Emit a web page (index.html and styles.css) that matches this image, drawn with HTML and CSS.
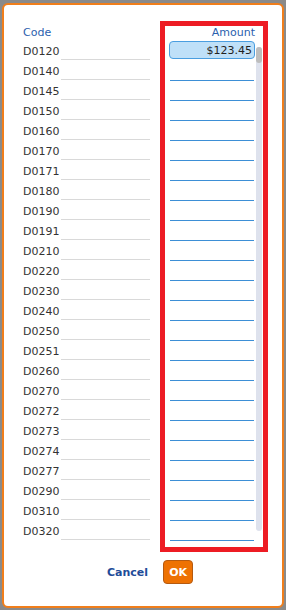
FILE: index.html
```html
<!DOCTYPE html>
<html lang="en">
<head>
    <meta charset="UTF-8">
    <meta name="viewport" content="width=device-width, initial-scale=1.0">
    <title>Amounts</title>
    <link rel="stylesheet" href="styles.css">
</head>
<body>
    <!-- Dialog -->
    <div class="dialog">
        <div class="dialog-body">
            <!-- Code column -->
            <div class="codes">
                <div class="col-header">Code</div>
                <div class="code-row"><span class="code-label">D0120</span><span class="code-line"></span></div>
                <div class="code-row"><span class="code-label">D0140</span><span class="code-line"></span></div>
                <div class="code-row"><span class="code-label">D0145</span><span class="code-line"></span></div>
                <div class="code-row"><span class="code-label">D0150</span><span class="code-line"></span></div>
                <div class="code-row"><span class="code-label">D0160</span><span class="code-line"></span></div>
                <div class="code-row"><span class="code-label">D0170</span><span class="code-line"></span></div>
                <div class="code-row"><span class="code-label">D0171</span><span class="code-line"></span></div>
                <div class="code-row"><span class="code-label">D0180</span><span class="code-line"></span></div>
                <div class="code-row"><span class="code-label">D0190</span><span class="code-line"></span></div>
                <div class="code-row"><span class="code-label">D0191</span><span class="code-line"></span></div>
                <div class="code-row"><span class="code-label">D0210</span><span class="code-line"></span></div>
                <div class="code-row"><span class="code-label">D0220</span><span class="code-line"></span></div>
                <div class="code-row"><span class="code-label">D0230</span><span class="code-line"></span></div>
                <div class="code-row"><span class="code-label">D0240</span><span class="code-line"></span></div>
                <div class="code-row"><span class="code-label">D0250</span><span class="code-line"></span></div>
                <div class="code-row"><span class="code-label">D0251</span><span class="code-line"></span></div>
                <div class="code-row"><span class="code-label">D0260</span><span class="code-line"></span></div>
                <div class="code-row"><span class="code-label">D0270</span><span class="code-line"></span></div>
                <div class="code-row"><span class="code-label">D0272</span><span class="code-line"></span></div>
                <div class="code-row"><span class="code-label">D0273</span><span class="code-line"></span></div>
                <div class="code-row"><span class="code-label">D0274</span><span class="code-line"></span></div>
                <div class="code-row"><span class="code-label">D0277</span><span class="code-line"></span></div>
                <div class="code-row"><span class="code-label">D0290</span><span class="code-line"></span></div>
                <div class="code-row"><span class="code-label">D0310</span><span class="code-line"></span></div>
                <div class="code-row"><span class="code-label">D0320</span><span class="code-line"></span></div>
            </div>

            <!-- Amount column (highlighted) -->
            <div class="amount-panel">
                <div class="amounts">
                    <div class="col-header amount-header">Amount</div>
                    <div class="amount-row"><div class="amount-input filled">$123.45</div></div>
                    <div class="amount-row"><div class="amount-line"></div></div>
                    <div class="amount-row"><div class="amount-line"></div></div>
                    <div class="amount-row"><div class="amount-line"></div></div>
                    <div class="amount-row"><div class="amount-line"></div></div>
                    <div class="amount-row"><div class="amount-line"></div></div>
                    <div class="amount-row"><div class="amount-line"></div></div>
                    <div class="amount-row"><div class="amount-line"></div></div>
                    <div class="amount-row"><div class="amount-line"></div></div>
                    <div class="amount-row"><div class="amount-line"></div></div>
                    <div class="amount-row"><div class="amount-line"></div></div>
                    <div class="amount-row"><div class="amount-line"></div></div>
                    <div class="amount-row"><div class="amount-line"></div></div>
                    <div class="amount-row"><div class="amount-line"></div></div>
                    <div class="amount-row"><div class="amount-line"></div></div>
                    <div class="amount-row"><div class="amount-line"></div></div>
                    <div class="amount-row"><div class="amount-line"></div></div>
                    <div class="amount-row"><div class="amount-line"></div></div>
                    <div class="amount-row"><div class="amount-line"></div></div>
                    <div class="amount-row"><div class="amount-line"></div></div>
                    <div class="amount-row"><div class="amount-line"></div></div>
                    <div class="amount-row"><div class="amount-line"></div></div>
                    <div class="amount-row"><div class="amount-line"></div></div>
                    <div class="amount-row"><div class="amount-line"></div></div>
                    <div class="amount-row"><div class="amount-line"></div></div>
                </div>
                <div class="scrollbar"><div class="scroll-thumb"></div></div>
            </div>
        </div>

        <!-- Buttons -->
        <div class="dialog-footer">
            <a href="#" class="cancel-link">Cancel</a>
            <button class="ok-button">OK</button>
        </div>
    </div>
</body>
</html>
```

FILE: styles.css
```css
/* Basic reset */
* {
    margin: 0;
    padding: 0;
    box-sizing: border-box;
}

body {
    font-family: "DejaVu Sans", Verdana, sans-serif;
    font-size: 11px;
    color: #333;
    background-color: #8a8a8a;
}

/* Dialog box */
.dialog {
    width: 282px;
    height: 605px;
    margin: 3px 0 0 2px;
    background-color: #fff;
    border: 2px solid #f07e1b;
    border-radius: 6px;
    padding: 16px 0 0 19px;
}

.dialog-body {
    display: flex;
    align-items: flex-start;
}

.col-header {
    height: 14px;
    line-height: 14px;
    color: #2b5fae;
}

/* Code column */
.codes {
    width: 137px;
    margin-top: 5px;
}

.code-row {
    display: flex;
    height: 20px;
}

.code-label {
    width: 38px;
    line-height: 23px;
}

.code-line {
    width: 89px;
    height: 20px;
    border-bottom: 1px solid #d9d9d9;
}

/* Amount column */
.amount-panel {
    display: flex;
    gap: 1px;
    border: 5px solid #ed1c24;
    padding: 0 1px 6px 4px;
}

.amounts {
    width: 86px;
}

.amount-header {
    text-align: right;
}

.amount-row {
    height: 20px;
}

.amount-input {
    height: 18px;
    margin-top: 1px;
    line-height: 17px;
    text-align: right;
    padding-right: 2px;
    color: #222;
    background-color: #bfe0f8;
    border: 1px solid #4a9ee0;
    border-radius: 4px;
}

.amount-line {
    height: 20px;
    margin: 0 1px;
    border-bottom: 1px solid #3d8fd6;
}

/* Fake scrollbar */
.scrollbar {
    width: 6px;
    height: 484px;
    margin-top: 21px;
    background-color: #dee2ed;
    border-radius: 3px;
}

.scroll-thumb {
    height: 16px;
    background-color: #bdbdbd;
    border-radius: 3px;
}

/* Footer */
.dialog-footer {
    display: flex;
    align-items: center;
    gap: 15px;
    margin-top: 8px;
    padding-left: 84px;
}

.cancel-link {
    color: #1f4c99;
    font-weight: bold;
    text-decoration: none;
}

.ok-button {
    width: 30px;
    height: 24px;
    font-family: "DejaVu Sans", Verdana, sans-serif;
    font-size: 11px;
    font-weight: bold;
    color: #fff;
    background-color: #ee7203;
    border: 1px solid #b55a10;
    border-radius: 4px;
}
```
